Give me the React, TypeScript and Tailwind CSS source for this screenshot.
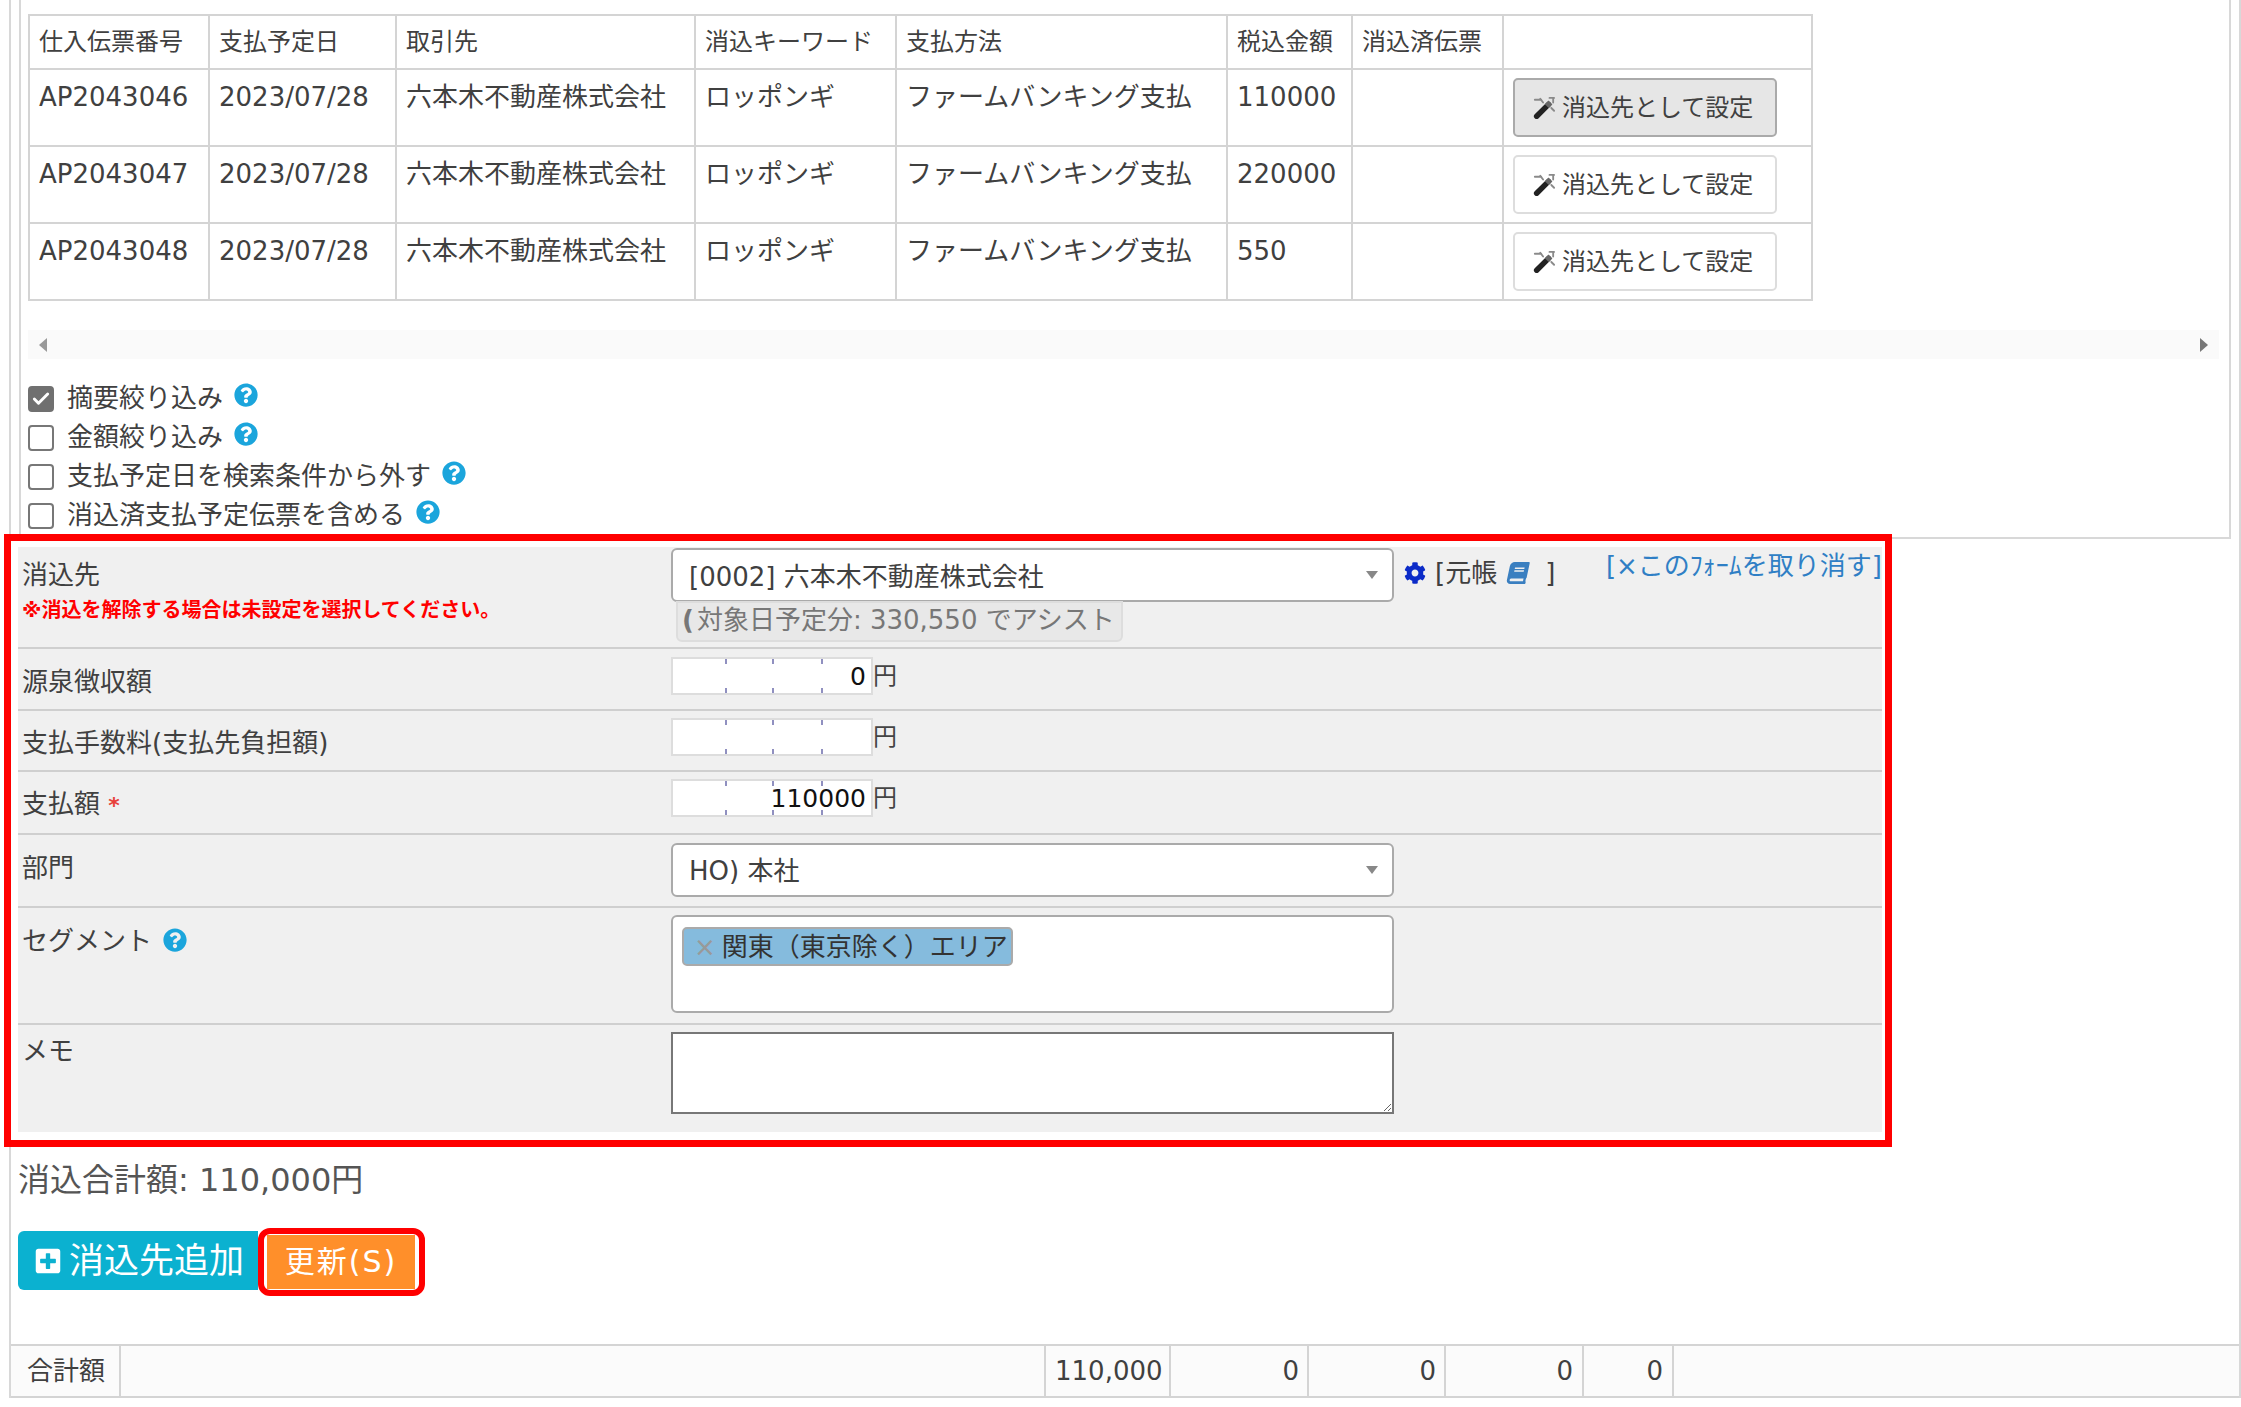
import React from 'react';
import { Check } from 'lucide-react';
import { FaBook, FaCog, FaPlusSquare, FaQuestionCircle } from 'react-icons/fa';

const rows = [
    { no: 'AP2043046', amount: '110000', active: true },
    { no: 'AP2043047', amount: '220000', active: false },
    { no: 'AP2043048', amount: '550', active: false },
];

const headers = ['仕入伝票番号', '支払予定日', '取引先', '消込キーワード', '支払方法', '税込金額', '消込済伝票', ''];

const checks = [
    { label: '摘要絞り込み', checked: true },
    { label: '金額絞り込み', checked: false },
    { label: '支払予定日を検索条件から外す', checked: false },
    { label: '消込済支払予定伝票を含める', checked: false },
];

const HelpIcon = () => <FaQuestionCircle className="w-[24px] h-[24px] text-[#1ba5dc] shrink-0" />;

const Arrow = () => (
    <span className="w-0 h-0 border-x-[6px] border-t-[8px] border-x-transparent border-t-[#888888]" />
);

// wand with a few sparks at its tip
const WandIcon = () => (
    <svg viewBox="0 0 24 24" className="w-[22px] h-[22px] mr-[7px] shrink-0">
        <path d="M4 21 L17 8" stroke="#222222" strokeWidth="6" strokeLinecap="round" />
        <path d="M15 10 L19 6" stroke="#666666" strokeWidth="6" />
        <path d="M2 3 L9 3 M8 2 L11 6 M20 12 L23 15" stroke="#8a8a8a" strokeWidth="2" strokeLinecap="round" />
        <path d="M18 1 L23 1 M22 2 L22 6" stroke="#8a8a8a" strokeWidth="2" strokeLinecap="round" />
    </svg>
);

const AmountInput = ({ value, top }: { value: string; top: string }) => (
    <div className={`flex items-center ${top}`}>
        <div className="relative w-[202px] h-[38px]">
            <input
                readOnly
                value={value}
                className="w-full h-full bg-white border-2 border-[#dddddd] text-right text-[25px] pr-[5px] text-[#111111] outline-none"
            />
            <span className="absolute left-[54px] top-[2px] w-[2px] h-[5px] bg-[#9090c0]" />
            <span className="absolute left-[101px] top-[2px] w-[2px] h-[5px] bg-[#9090c0]" />
            <span className="absolute left-[150px] top-[2px] w-[2px] h-[5px] bg-[#9090c0]" />
            <span className="absolute left-[54px] bottom-[2px] w-[2px] h-[5px] bg-[#9090c0]" />
            <span className="absolute left-[101px] bottom-[2px] w-[2px] h-[5px] bg-[#9090c0]" />
            <span className="absolute left-[150px] bottom-[2px] w-[2px] h-[5px] bg-[#9090c0]" />
        </div>
        <span className="text-[24px] leading-[32px] text-[#444444]">円</span>
    </div>
);

const App = () => {
    return (
        <div className="w-[2241px] min-h-[1407px] bg-white text-[#404040] text-[26px] leading-[32px] [font-family:'DejaVu_Sans','Noto_Sans_CJK_JP',sans-serif]">
            <div className="ml-[9px] w-[2232px] border-x-2 border-[#d8d8d8]">
                <div className="ml-[8px] w-[2212px] h-[539px] pt-[14px] border-x-2 border-b-2 border-[#d8d8d8]">
                    <table className="ml-[7px] w-[1783px] table-fixed border-collapse border-2 border-[#d4d4d4]">
                        <colgroup>
                            <col className="w-[180px]" />
                            <col className="w-[187px]" />
                            <col className="w-[299px]" />
                            <col className="w-[201px]" />
                            <col className="w-[331px]" />
                            <col className="w-[125px]" />
                            <col className="w-[151px]" />
                            <col className="w-[309px]" />
                        </colgroup>
                        <thead>
                            <tr className="h-[54px]">
                                {headers.map((h, i) => (
                                    <th key={i} className="border-2 border-[#d4d4d4] pl-[9px] align-middle text-left font-normal text-[24px] whitespace-nowrap overflow-hidden">
                                        {h}
                                    </th>
                                ))}
                            </tr>
                        </thead>
                        <tbody>
                            {rows.map((r) => (
                                <tr key={r.no} className="h-[77px]">
                                    <td className="border-2 border-[#d4d4d4] pl-[9px] pt-[11px] align-top">{r.no}</td>
                                    <td className="border-2 border-[#d4d4d4] pl-[9px] pt-[11px] align-top">2023/07/28</td>
                                    <td className="border-2 border-[#d4d4d4] pl-[9px] pt-[11px] align-top whitespace-nowrap">六本木不動産株式会社</td>
                                    <td className="border-2 border-[#d4d4d4] pl-[9px] pt-[11px] align-top whitespace-nowrap">ロッポンギ</td>
                                    <td className="border-2 border-[#d4d4d4] pl-[9px] pt-[11px] align-top whitespace-nowrap">ファームバンキング支払</td>
                                    <td className="border-2 border-[#d4d4d4] pl-[9px] pt-[11px] align-top">{r.amount}</td>
                                    <td className="border-2 border-[#d4d4d4]" />
                                    <td className="border-2 border-[#d4d4d4] pl-[9px] align-middle">
                                        <button
                                            className={
                                                r.active
                                                    ? 'flex items-center w-[264px] h-[59px] rounded-[5px] border-2 border-[#aaaaaa] bg-[#e6e6e6] pl-[18px] text-[24px]'
                                                    : 'flex items-center w-[264px] h-[59px] rounded-[5px] border-2 border-[#dddddd] bg-white pl-[18px] text-[24px]'
                                            }
                                        >
                                            <WandIcon />
                                            消込先として設定
                                        </button>
                                    </td>
                                </tr>
                            ))}
                        </tbody>
                    </table>

                    <div className="ml-[7px] mt-[29px] w-[2191px] h-[29px] bg-[#fafafa] flex items-center justify-between px-[11px]">
                        <span className="w-0 h-0 border-y-[7px] border-r-[8px] border-y-transparent border-r-[#999999]" />
                        <span className="w-0 h-0 border-y-[7px] border-l-[8px] border-y-transparent border-l-[#777777]" />
                    </div>

                    <div className="ml-[7px] mt-[20px] flex flex-col">
                        {checks.map((c) => (
                            <div key={c.label} className="flex items-center h-[39px]">
                                <span
                                    className={
                                        c.checked
                                            ? 'flex items-center justify-center w-[26px] h-[26px] rounded-[4px] bg-[#707070] border-2 border-[#707070]'
                                            : 'w-[26px] h-[26px] rounded-[4px] bg-white border-2 border-[#777777]'
                                    }
                                >
                                    {c.checked && <Check className="w-[20px] h-[20px] text-white" strokeWidth={3.5} />}
                                </span>
                                <span className="ml-[13px] mr-[11px] -mt-[2px]">{c.label}</span>
                                <span className="-mt-[8px]">
                                    <HelpIcon />
                                </span>
                            </div>
                        ))}
                    </div>
                </div>

                {/* form highlighted by the red annotation box */}
                <div className="relative ml-[7px] mt-[8px] w-[1864px] bg-[#f0f0f0]">
                    <div className="absolute -left-[14px] -right-[10px] -top-[13px] -bottom-[15px] border-[7px] border-[#ff0000] pointer-events-none" />

                    <div className="flex h-[102px] border-b-2 border-[#cfcfcf]">
                        <div className="w-[653px] pl-[4px] pt-[12px]">
                            <p>消込先</p>
                            <p className="mt-[6px] text-[20px] leading-[26px] font-bold text-[#ff0000] whitespace-nowrap">
                                ※消込を解除する場合は未設定を選択してください。
                            </p>
                        </div>
                        <div className="pt-[1px] w-[723px]">
                            <div className="flex items-center justify-between w-[723px] h-[54px] rounded-[6px] border-2 border-[#aaaaaa] bg-white pl-[16px] pr-[14px]">
                                <span className="pt-[4px]">[0002] 六本木不動産株式会社</span>
                                <Arrow />
                            </div>
                            <div className="ml-[5px] -mt-[1px] w-[447px] h-[41px] pt-[1px] rounded-b-[6px] border-2 border-[#dddddd] bg-[#e8e8e8] text-[#777777] whitespace-nowrap pl-[4px]">
                                <span className="font-bold mr-[3px]">(</span>対象日予定分: 330,550 でアシスト
                            </div>
                        </div>
                        <div className="flex items-start pt-[15px] ml-[10px]">
                            <FaCog className="w-[22px] h-[22px] text-[#0b2bc8] mr-[9px]" />
                            <span className="-mt-[5px]">[元帳</span>
                            <FaBook className="w-[24px] h-[22px] text-[#3a7fc0] ml-[9px] -skew-x-[12deg]" />
                            <span className="-mt-[5px] ml-[15px]">]</span>
                        </div>
                        <span className="ml-auto pt-[3px] whitespace-nowrap text-[#2f7fc5]">[×このﾌｫｰﾑを取り消す]</span>
                    </div>

                    <div className="flex h-[62px] border-b-2 border-[#cfcfcf]">
                        <div className="w-[653px] pl-[4px] pt-[17px]">源泉徴収額</div>
                        <AmountInput value="0" top="pt-[8px] h-[46px]" />
                    </div>
                    <div className="flex h-[61px] border-b-2 border-[#cfcfcf]">
                        <div className="w-[653px] pl-[4px] pt-[16px]">支払手数料(支払先負担額)</div>
                        <AmountInput value="" top="pt-[7px] h-[45px]" />
                    </div>
                    <div className="flex h-[63px] border-b-2 border-[#cfcfcf]">
                        <div className="w-[653px] pl-[4px] pt-[16px]">
                            支払額 <span className="text-[#e8413a] text-[22px] font-bold">*</span>
                        </div>
                        <AmountInput value="110000" top="pt-[7px] h-[45px]" />
                    </div>

                    <div className="flex h-[73px] border-b-2 border-[#cfcfcf]">
                        <div className="w-[653px] pl-[4px] pt-[17px]">部門</div>
                        <div className="pt-[8px]">
                            <div className="flex items-center justify-between w-[723px] h-[54px] rounded-[6px] border-2 border-[#aaaaaa] bg-white pl-[16px] pr-[14px]">
                                <span className="pt-[2px]">HO) 本社</span>
                                <Arrow />
                            </div>
                        </div>
                    </div>

                    <div className="flex h-[117px] border-b-2 border-[#cfcfcf]">
                        <div className="flex items-start w-[653px] pl-[4px] pt-[17px]">
                            <span>セグメント</span>
                            <span className="ml-[11px] mt-[3px]">
                                <HelpIcon />
                            </span>
                        </div>
                        <div className="pt-[7px]">
                            <div className="w-[723px] h-[98px] rounded-[6px] border-2 border-[#aaaaaa] bg-white pl-[9px] pt-[10px]">
                                <span className="flex items-center w-[331px] h-[39px] rounded-[5px] border-2 border-[#aaaaaa] bg-[#85bbdd] pl-[10px] whitespace-nowrap text-[#333333]">
                                    <span className="text-[#999999] mr-[6px]">×</span>
                                    関東（東京除く）エリア
                                </span>
                            </div>
                        </div>
                    </div>

                    <div className="flex h-[107px]">
                        <div className="w-[653px] pl-[4px] pt-[10px]">メモ</div>
                        <div className="pt-[7px]">
                            <textarea readOnly className="block w-[723px] h-[82px] bg-white border-2 border-[#777777] outline-none" />
                        </div>
                    </div>
                </div>

                <p className="ml-[7px] mt-[32px] text-[32px] leading-[32px] text-[#555555] whitespace-nowrap">消込合計額: 110,000円</p>

                <div className="ml-[7px] mt-[35px] flex items-start">
                    <button className="flex items-center w-[240px] h-[59px] rounded-l-[6px] bg-[#0bb1d0] pl-[16px] text-white text-[35px] whitespace-nowrap">
                        <FaPlusSquare className="w-[28px] h-[28px] mr-[7px]" />
                        消込先追加
                    </button>
                    <div className="relative ml-[9px] mt-[4px]">
                        <button className="w-[148px] h-[54px] bg-[#ff8f2a] text-white text-[30px] tracking-[2px] whitespace-nowrap">更新(S)</button>
                        <div className="absolute -left-[9px] -right-[10px] -top-[7px] -bottom-[7px] border-[6px] border-[#ff0000] rounded-[12px] pointer-events-none" />
                    </div>
                </div>

                <div className="mt-[54px] flex h-[54px] border-y-2 border-[#d4d4d4] bg-[#fbfbfb] items-stretch">
                    <div className="w-[110px] pl-[16px] border-r-2 border-[#d4d4d4] flex items-center">合計額</div>
                    <div className="w-[925px] border-r-2 border-[#d4d4d4]" />
                    <div className="w-[125px] pl-[9px] border-r-2 border-[#d4d4d4] flex items-center">110,000</div>
                    <div className="w-[138px] pr-[8px] border-r-2 border-[#d4d4d4] flex items-center justify-end">0</div>
                    <div className="w-[137px] pr-[8px] border-r-2 border-[#d4d4d4] flex items-center justify-end">0</div>
                    <div className="w-[138px] pr-[9px] border-r-2 border-[#d4d4d4] flex items-center justify-end">0</div>
                    <div className="w-[90px] pr-[9px] border-r-2 border-[#d4d4d4] flex items-center justify-end">0</div>
                </div>
            </div>
        </div>
    );
};

export default App;
